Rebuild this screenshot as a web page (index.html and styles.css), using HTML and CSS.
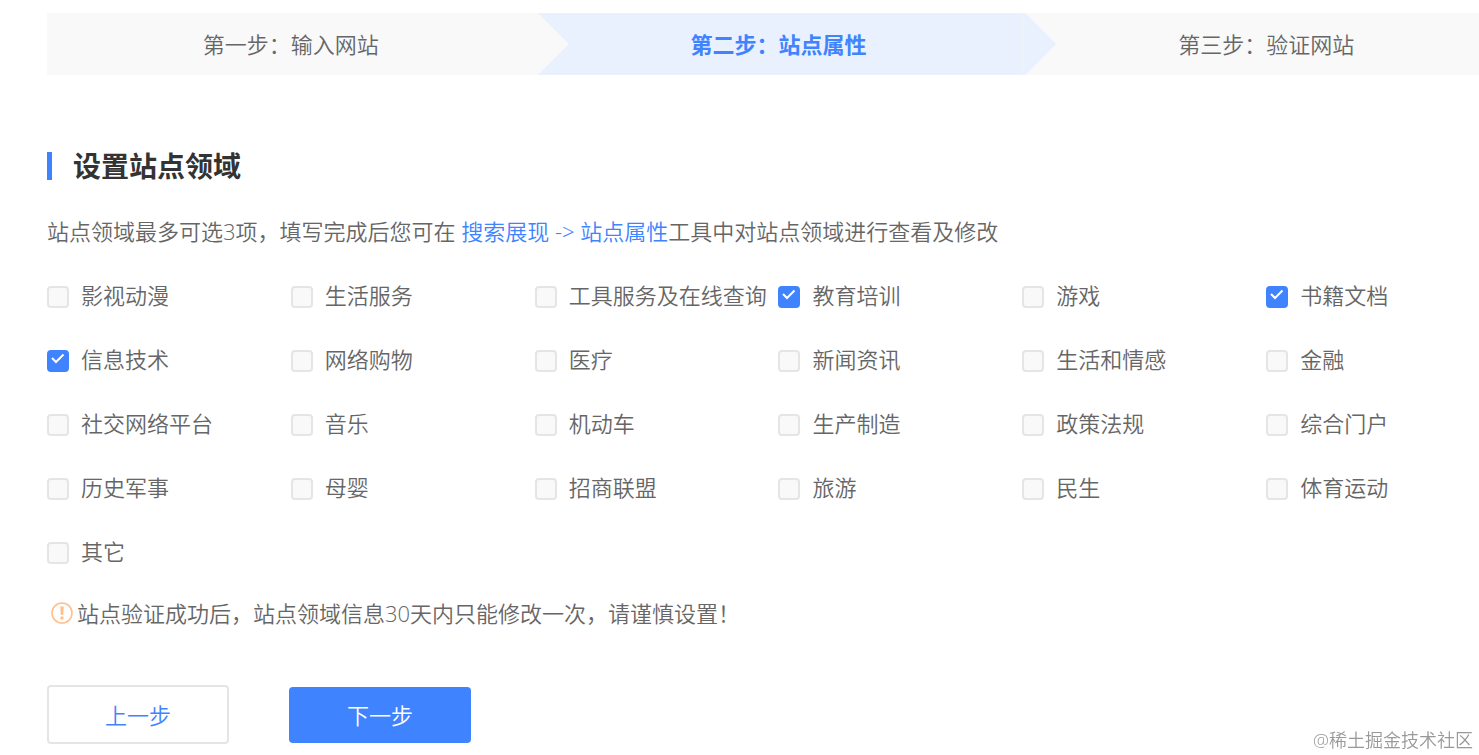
FILE: index.html
```html
<!DOCTYPE html>
<html lang="zh-CN">
<head>
    <meta charset="UTF-8">
    <meta name="viewport" content="width=device-width, initial-scale=1.0">
    <title>站点属性</title>
    <link rel="stylesheet" href="styles.css">
</head>
<body>
    <main class="page">
        <ol class="steps">
            <li class="step">第一步：输入网站</li>
            <li class="step active">第二步：站点属性</li>
            <li class="step">第三步：验证网站</li>
        </ol>

        <form class="site-form">
            <h2 class="title">设置站点领域</h2>
            <p class="desc">站点领域最多可选3项，填写完成后您可在 <a href="#">搜索展现 -&gt; 站点属性</a>工具中对站点领域进行查看及修改</p>

            <div class="field-list">
                <label class="field"><input type="checkbox">影视动漫</label>
                <label class="field"><input type="checkbox">生活服务</label>
                <label class="field"><input type="checkbox">工具服务及在线查询</label>
                <label class="field"><input type="checkbox" checked>教育培训</label>
                <label class="field"><input type="checkbox">游戏</label>
                <label class="field"><input type="checkbox" checked>书籍文档</label>
                <label class="field"><input type="checkbox" checked>信息技术</label>
                <label class="field"><input type="checkbox">网络购物</label>
                <label class="field"><input type="checkbox">医疗</label>
                <label class="field"><input type="checkbox">新闻资讯</label>
                <label class="field"><input type="checkbox">生活和情感</label>
                <label class="field"><input type="checkbox">金融</label>
                <label class="field"><input type="checkbox">社交网络平台</label>
                <label class="field"><input type="checkbox">音乐</label>
                <label class="field"><input type="checkbox">机动车</label>
                <label class="field"><input type="checkbox">生产制造</label>
                <label class="field"><input type="checkbox">政策法规</label>
                <label class="field"><input type="checkbox">综合门户</label>
                <label class="field"><input type="checkbox">历史军事</label>
                <label class="field"><input type="checkbox">母婴</label>
                <label class="field"><input type="checkbox">招商联盟</label>
                <label class="field"><input type="checkbox">旅游</label>
                <label class="field"><input type="checkbox">民生</label>
                <label class="field"><input type="checkbox">体育运动</label>
                <label class="field"><input type="checkbox">其它</label>
            </div>

            <p class="tip">
                <svg class="tip-icon" viewBox="0 0 22 22" width="22" height="22" aria-hidden="true">
                    <circle cx="11" cy="11" r="10" fill="none" stroke="#ffc08c" stroke-width="1.6"/>
                    <path d="M9.2 4.500h3.600l-.6 8.500h-2.400z" fill="#ffc08c"/>
                    <circle cx="11" cy="16" r="1.700" fill="#ffc08c"/>
                </svg>
                <span>站点验证成功后，站点领域信息30天内只能修改一次，请谨慎设置！</span>
            </p>

            <div class="buttons">
                <button type="button" class="btn">上一步</button>
                <button type="button" class="btn btn-primary">下一步</button>
            </div>
        </form>
    </main>
    <div class="watermark">@稀土掘金技术社区</div>
</body>
</html>
```
FILE: styles.css
```css
* {
    box-sizing: border-box;
    margin: 0;
    padding: 0;
}

body {
    font-family: "Open Sans", "Noto Sans CJK SC", sans-serif;
    font-size: 22px;
    font-weight: 350;
    line-height: 30px;
    color: #666;
    background-color: #fff;
    overflow: hidden;
}

/* the content runs a little past the right edge */
.page {
    margin-right: -31px;
    padding: 13px 0 0 47px;
}

.steps {
    display: grid;
    grid-template-columns: repeat(3, 1fr);
    list-style: none;
}

.step {
    position: relative;
    line-height: 62px;
    text-align: center;
    background-color: #f9f9f9;
}

.step:not(:last-child)::after {
    content: "";
    position: absolute;
    top: 0;
    left: 100%;
    z-index: 1;
    width: 34px;
    height: 100%;
    background-color: inherit;
    clip-path: polygon(0 0, 3px 0, 100% 50%, 3px 100%, 0 100%);
}

.step.active {
    color: #4083ff;
    font-weight: bold;
    background-color: #eaf1fe;
}

.title {
    margin-top: 77px;
    padding-left: 21px;
    border-left: 5px solid #4083ff;
    font-size: 28px;
    line-height: 28px;
    color: #333;
}

.desc {
    margin-top: 36px;
}

.desc a {
    color: #4083ff;
    text-decoration: none;
}

.field-list {
    display: grid;
    grid-template-columns: repeat(6, 1fr);
    row-gap: 34px;
    margin-top: 34px;
}

.field {
    display: flex;
    gap: 12px;
    white-space: nowrap;
    cursor: pointer;
}

.field input {
    appearance: none;
    flex: none;
    width: 22px;
    height: 22px;
    margin-top: 6px;
    border: 2px solid #e5e5e5;
    border-radius: 4px;
    background-color: #f9f9f9;
}

.field input:checked {
    border-color: #4083ff;
    background: #4083ff url("data:image/svg+xml,%3Csvg xmlns='http://www.w3.org/2000/svg' viewBox='0 0 22 22'%3E%3Cpath d='M5 8l4 4 7.500-7.500' fill='none' stroke='white' stroke-width='2'/%3E%3C/svg%3E") center / 22px 22px no-repeat border-box;
}

.tip {
    display: flex;
    align-items: center;
    gap: 4px;
    margin-top: 32px;
    padding-left: 4px;
}

.tip-icon {
    flex: none;
}

.buttons {
    display: flex;
    align-items: center;
    gap: 60px;
    margin-top: 57px;
}

.btn {
    width: 182px;
    height: 59px;
    border: 2px solid #e5e5e5;
    border-radius: 4px;
    font: inherit;
    color: #4083ff;
    background-color: #fff;
    cursor: pointer;
}

.btn-primary {
    height: 56px;
    border: none;
    color: #fff;
    background-color: #4083ff;
}

.watermark {
    position: fixed;
    right: 6px;
    bottom: 0;
    font-size: 18px;
    color: #999;
    text-shadow: 0 0 2px #fff;
}
```
